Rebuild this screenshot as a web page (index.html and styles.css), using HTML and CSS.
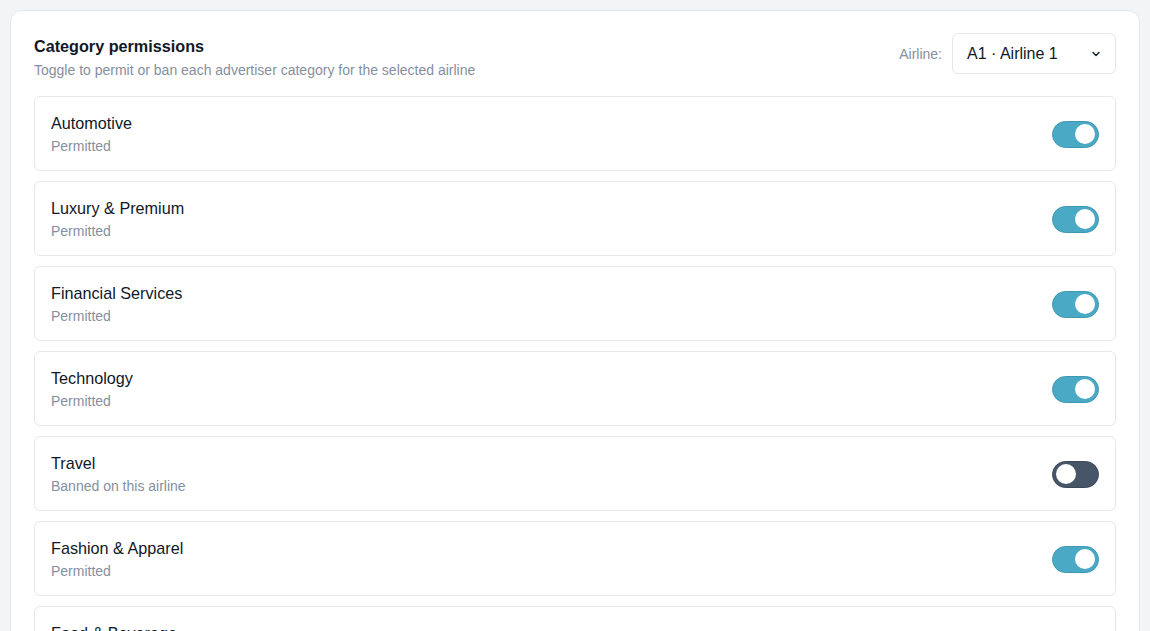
FILE: index.html
```html
<!DOCTYPE html>
<html lang="en">
<head>
<meta charset="utf-8">
<title>Category permissions</title>
<link rel="stylesheet" href="styles.css">
</head>
<body>
<div class="page">
  <section class="card">
    <header class="card-head">
      <div class="head-text">
        <h2 class="title">Category permissions</h2>
        <p class="subtitle">Toggle to permit or ban each advertiser category for the selected airline</p>
      </div>
      <div class="airline">
        <span class="airline-label">Airline:</span>
        <div class="select">
          <span class="select-value">A1 · Airline 1</span>
          <svg class="chev" width="12" height="12" viewBox="0 0 12 12"><path d="M3 4.5 6 7.5 9 4.5" fill="none" stroke="#1f2937" stroke-width="1.6" stroke-linecap="round" stroke-linejoin="round"/></svg>
        </div>
      </div>
    </header>
    <div class="list">
      <div class="row"><div class="info"><div class="name">Automotive</div><div class="status">Permitted</div></div><span class="toggle on"><span class="knob"></span></span></div>
      <div class="row"><div class="info"><div class="name">Luxury &amp; Premium</div><div class="status">Permitted</div></div><span class="toggle on"><span class="knob"></span></span></div>
      <div class="row"><div class="info"><div class="name">Financial Services</div><div class="status">Permitted</div></div><span class="toggle on"><span class="knob"></span></span></div>
      <div class="row"><div class="info"><div class="name">Technology</div><div class="status">Permitted</div></div><span class="toggle on"><span class="knob"></span></span></div>
      <div class="row"><div class="info"><div class="name">Travel</div><div class="status">Banned on this airline</div></div><span class="toggle off"><span class="knob"></span></span></div>
      <div class="row"><div class="info"><div class="name">Fashion &amp; Apparel</div><div class="status">Permitted</div></div><span class="toggle on"><span class="knob"></span></span></div>
      <div class="row"><div class="info"><div class="name">Food &amp; Beverage</div><div class="status">Permitted</div></div><span class="toggle on"><span class="knob"></span></span></div>
    </div>
  </section>
</div>
</body>
</html>
```
FILE: styles.css
```css
* { box-sizing: border-box; }
html, body { margin: 0; padding: 0; }
body {
  background: #f3f4f6;
  font-family: "Liberation Sans", Arial, sans-serif;
  color: #111827;
  height: 631px;
  overflow: hidden;
}
.page { padding: 10px 10px 0 10px; }
.card {
  background: #ffffff;
  border: 1px solid #e5e7eb;
  border-radius: 12px;
  padding: 23px 23px 24px 23px;
}
.card-head {
  display: flex;
  justify-content: space-between;
  align-items: flex-start;
  margin-bottom: 16px;
}
.title {
  margin: 0;
  font-size: 16.2px;
  line-height: 24px;
  font-weight: 700;
  color: #111827;
}
.subtitle {
  margin: 2px 0 0;
  font-size: 14px;
  line-height: 20px;
  color: #858fa0;
}
.airline {
  display: flex;
  align-items: center;
  gap: 10px;
  margin-top: -1px;
}
.airline-label {
  font-size: 14px;
  color: #858fa0;
}
.select {
  width: 164px;
  height: 41px;
  border: 1px solid #e5e7eb;
  border-radius: 6px;
  display: flex;
  align-items: center;
  justify-content: space-between;
  padding: 0 13px 0 14px;
  font-size: 16px;
  color: #111827;
}
.chev { display: block; }
.list {
  display: flex;
  flex-direction: column;
  gap: 10px;
}
.row {
  border: 1px solid #e5e7eb;
  border-radius: 6px;
  padding: 14px 16px 14px 16px;
  display: flex;
  align-items: center;
  justify-content: space-between;
  min-height: 75px;
}
.name {
  font-size: 16.2px;
  line-height: 24px;
  color: #111827;
}
.status {
  font-size: 14px;
  line-height: 20px;
  color: #858fa0;
  margin-top: 1px;
}
.toggle {
  width: 47px;
  height: 27px;
  border-radius: 14px;
  display: flex;
  align-items: center;
  padding: 0 3px;
  flex-shrink: 0;
  margin-top: 1px;
}
.toggle.on {
  background: #4aa9c4;
  border: 1px solid #3f98b2;
  justify-content: flex-end;
}
.toggle.off {
  background: #475569;
  border: 1px solid #3c485a;
  justify-content: flex-start;
}
.knob {
  width: 20px;
  height: 20px;
  border-radius: 50%;
  background: #ffffff;
}
```
